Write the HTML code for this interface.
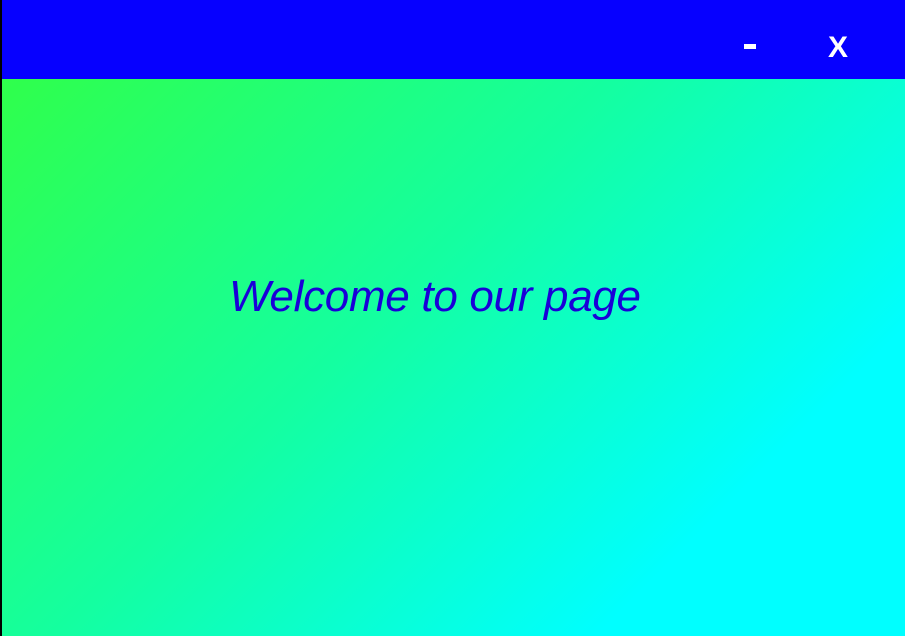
<!DOCTYPE html>
<html><head><style>
html,body{margin:0;padding:0;width:905px;height:636px;overflow:hidden}
body{background:linear-gradient(135deg,#33ff40 0%,#14ffa0 45%,#00ffff 80%,#00ffff 100%);position:relative;border-left:2px solid #000;box-sizing:border-box;font-family:"Liberation Sans",sans-serif}
.bar{position:absolute;left:0;top:0;width:905px;height:79px;background:#0600ff}
.min{position:absolute;left:742px;top:44px;width:12px;height:5px;background:#fff}
.x{position:absolute;left:826px;top:30px;color:#fff;font-weight:bold;font-size:30px;line-height:36px}
.t{position:absolute;left:227px;top:271px;color:#1a00d8;font-style:italic;font-size:44px;line-height:52px;white-space:nowrap;letter-spacing:-0.3px}
</style></head><body>
<div class="bar"><div class="min"></div><div class="x">X</div></div>
<div class="t">Welcome to our page</div>
</body></html>
